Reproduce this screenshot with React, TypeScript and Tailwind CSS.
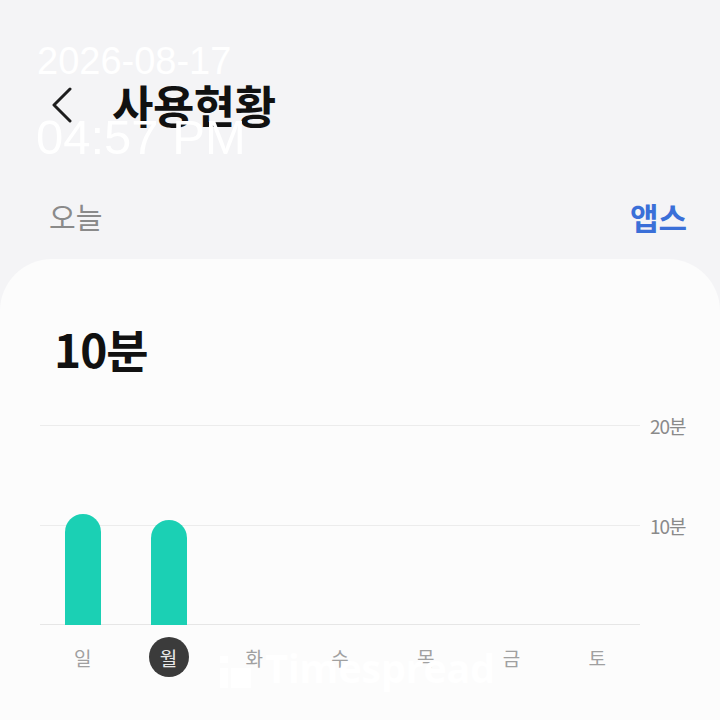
import React from "react";

const days = ["일", "월", "화", "수", "목", "금", "토"];
const bars = [111, 105, 0, 0, 0, 0, 0];

export default function App() {
  return (
    <div
      className="relative w-[720px] h-[720px] overflow-hidden bg-[#f4f4f6]"
      style={{ fontFamily: '"Noto Sans CJK KR", "Noto Sans", sans-serif' }}
    >
      {/* Header */}
      <div className="pt-[80px]">
        <div className="flex h-[54px] items-center pl-[50px]">
          <svg width="24" height="36" viewBox="0 0 24 36" className="-mt-[4px] text-[#1e1e1e]">
            <path d="M20 2 L4 18 L20 34" fill="none" stroke="currentColor" strokeWidth="3" strokeLinecap="round" strokeLinejoin="round" />
          </svg>
          <div className="-mt-[6px] ml-[38px] text-[45px] font-bold leading-none tracking-[-0.5px] text-[#111]">사용현황</div>
        </div>
      </div>

      {/* Tabs row */}
      <div className="mt-[62px] flex h-[40px] items-center justify-between pl-[49px] pr-[33px]">
        <div className="text-[29px] leading-none text-[#8a8a8a]">오늘</div>
        <div className="text-[31px] font-bold leading-none text-[#3a6fd8]">앱스</div>
      </div>

      {/* Card */}
      <div className="mt-[23px] h-[500px] rounded-t-[52px] bg-[#fcfcfc] pt-[66px]">
        <div className="pl-[54px] text-[46px] font-bold leading-none tracking-[-1px] text-[#111]">10분</div>

        <div className="mt-[54px] flex pl-[40px]">
          <div className="relative h-[200px] w-[600px]">
            <div className="flex h-full flex-col justify-between">
              <div className="h-px bg-[#ececec]" />
              <div className="h-px bg-[#ececec]" />
              <div className="h-px bg-[#e6e6e6]" />
            </div>
            <div className="absolute inset-x-0 bottom-0 top-0 grid grid-cols-7 items-end">
              {bars.map((h, i) => (
                <div key={i} className="flex justify-center">
                  {h > 0 && (
                    <div className="w-[36px] rounded-t-full bg-[#1bd0b4]" style={{ height: h }} />
                  )}
                </div>
              ))}
            </div>
          </div>
          <div className="relative ml-[10px] h-[200px] text-[19px] leading-none text-[#8a8a8a]">
            <div className="absolute left-0 top-[-9px] whitespace-nowrap tracking-[-1px]">20분</div>
            <div className="absolute left-0 top-[91px] whitespace-nowrap tracking-[-1px]">10분</div>
          </div>
        </div>

        <div className="ml-[40px] mt-[12px] grid w-[600px] grid-cols-7">
          {days.map((d, i) => (
            <div key={d} className="flex justify-center">
              {i === 1 ? (
                <div className="flex h-[40px] w-[40px] items-center justify-center rounded-full bg-[#3b3b3b] text-[19px] leading-none text-[#e8e8e8]">
                  {d}
                </div>
              ) : (
                <div className="flex h-[40px] items-center text-[19px] leading-none text-[#a0a0a0]">{d}</div>
              )}
            </div>
          ))}
        </div>
      </div>

      {/* Watermark date/time */}
      <div
        className="absolute left-[37px] top-[42px] text-[38px] leading-none text-white"
        style={{ fontFamily: '"Liberation Sans", Arial, sans-serif' }}
      >
        2026-08-17
      </div>
      <div
        className="absolute left-[36px] top-[113px] text-[49px] leading-none text-white"
        style={{ fontFamily: '"Liberation Sans", Arial, sans-serif' }}
      >
        04:57 PM
      </div>

      {/* Timespread watermark */}
      <div className="absolute left-[220px] top-[648px] flex items-end gap-[14px] text-white">
        <div className="flex h-[32px] items-end gap-[3px]">
          <div className="flex h-full flex-col justify-between">
            <div className="h-[7px] w-[8px] bg-white" />
            <div className="h-[20px] w-[8px] bg-white" />
          </div>
          <div className="h-[20px] w-[20px] bg-white" />
        </div>
        <div
          className="text-[40px] font-bold leading-none tracking-[-0.5px]"
          style={{ fontFamily: '"Open Sans", "Liberation Sans", sans-serif' }}
        >
          Timespread
        </div>
      </div>
    </div>
  );
}
